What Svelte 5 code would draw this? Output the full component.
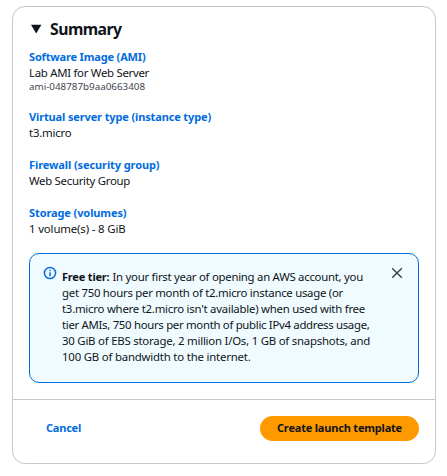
<script>
  const groups = [
    {
      title: 'Software Image (AMI)', titleWidth: 116.5,
      value: 'Lab AMI for Web Server', valueWidth: 120,
      note: 'ami-048787b9aa0663408', noteWidth: 116
    },
    { title: 'Virtual server type (instance type)', titleWidth: 182, value: 't3.micro', valueWidth: 42.5 },
    { title: 'Firewall (security group)', titleWidth: 130.5, value: 'Web Security Group', valueWidth: 101 },
    { title: 'Storage (volumes)', titleWidth: 97.5, value: '1 volume(s) - 8 GiB', valueWidth: 96.5 }
  ];

  const lines = [
    { text: 'get 750 hours per month of t2.micro instance usage (or', width: 281 },
    { text: "t3.micro where t2.micro isn't available) when used with free", width: 303 },
    { text: 'tier AMIs, 750 hours per month of public IPv4 address usage,', width: 307.5 },
    { text: '30 GiB of EBS storage, 2 million I/Os, 1 GB of snapshots, and', width: 308 },
    { text: '100 GB of bandwidth to the internet.', width: 188.5 }
  ];

  // Tracks a single line of text so that it fills the given measure.
  function track(node, width) {
    const natural = node.getBoundingClientRect().width;
    node.style.letterSpacing = (width - natural) / node.textContent.length + 'px';
  }
</script>

<section class="card">
  <div class="body">
    <header>
      <svg class="caret" width="12" height="10" viewBox="0 0 12 10"><path d="M1 .8h10.4L6.2 9.6z" /></svg>
      <h2><span use:track={71.5}>Summary</span></h2>
    </header>

    <div class="groups">
      {#each groups as g}
        <div class="group">
          <a class="title"><span use:track={g.titleWidth}>{g.title}</span></a>
          <div><span use:track={g.valueWidth}>{g.value}</span></div>
          {#if g.note}<div class="note"><span use:track={g.noteWidth}>{g.note}</span></div>{/if}
        </div>
      {/each}
    </div>

    <div class="alert">
      <svg class="info" width="14" height="14" viewBox="0 0 14 14">
        <circle cx="7" cy="7" r="5.6" />
        <path d="M7 6.2v4M7 3.8v1.4" />
      </svg>
      <div class="text">
        <div><b><span use:track={47.5}>Free tier:</span></b><span class="intro" use:track={250.5}>In your first year of opening an AWS account, you</span></div>
        {#each lines as l}
          <div><span use:track={l.width}>{l.text}</span></div>
        {/each}
      </div>
      <button class="close" aria-label="Close">
        <svg width="12" height="12" viewBox="0 0 12 12"><path d="M1.2 1.2l9.6 9.6M10.8 1.2l-9.6 9.6" /></svg>
      </button>
    </div>
  </div>

  <footer>
    <button class="cancel"><span use:track={35}>Cancel</span></button>
    <button class="create"><span use:track={125}>Create launch template</span></button>
  </footer>
</section>

<style>
  :global(body) { background: #fff; }
  .card {
    box-sizing: border-box;
    width: 424px;
    height: 458px;
    margin: 6px 0 0 12px;
    border: 1px solid #c6c6cd;
    border-radius: 13px;
    display: flex;
    flex-direction: column;
    font: 11.4px/16px "Noto Sans", sans-serif;
    color: #0f141a;
    white-space: nowrap;
  }
  span { display: inline-block; white-space: pre; }
  .body { height: 392px; padding: 0 16px; flex: none; }
  header { display: flex; align-items: center; height: 20px; padding-top: 12px; }
  .caret { margin-left: 1px; fill: #0f141a; }
  h2 { margin: 0 0 0 8px; font-size: 15.8px; line-height: 20px; font-weight: 700; }
  .groups { display: flex; flex-direction: column; gap: 16px; margin-top: 10px; }
  .group { display: flex; flex-direction: column; }
  .title { color: #006ce0; font-weight: 700; font-size: 11px; }
  .note { font-size: 9.8px; line-height: 12px; color: #424650; }
  .alert {
    box-sizing: border-box;
    height: 130px;
    margin-top: 16px;
    padding: 13px 14px;
    border: 1px solid #006ce0;
    border-radius: 10px;
    background: #f0fbff;
    display: flex;
    align-items: flex-start;
  }
  .info { flex: none; margin: -1px 0 0 -1px; fill: none; stroke: #006ce0; stroke-width: 1.5; }
  .text { margin: 2px 0 0 5px; flex: 1; }
  .intro { margin-left: 3px; }
  b { font-size: 11px; }
  button { border: 0; padding: 0; background: none; font: inherit; }
  .close { display: flex; margin-right: 1px; }
  .close path { stroke: #424650; stroke-width: 1.5; fill: none; }
  footer {
    flex: 1;
    display: flex;
    justify-content: space-between;
    align-items: flex-start;
    border-top: 1px solid #c6c6cd;
    padding: 16px 16px 0 33px;
    font-weight: 700;
    font-size: 11px;
  }
  button span { margin-bottom: 2px; }
  .cancel { color: #006ce0; height: 25px; }
  .create { width: 159px; height: 25px; border-radius: 13px; background: #ff9900; color: #0f141a; }
</style>
